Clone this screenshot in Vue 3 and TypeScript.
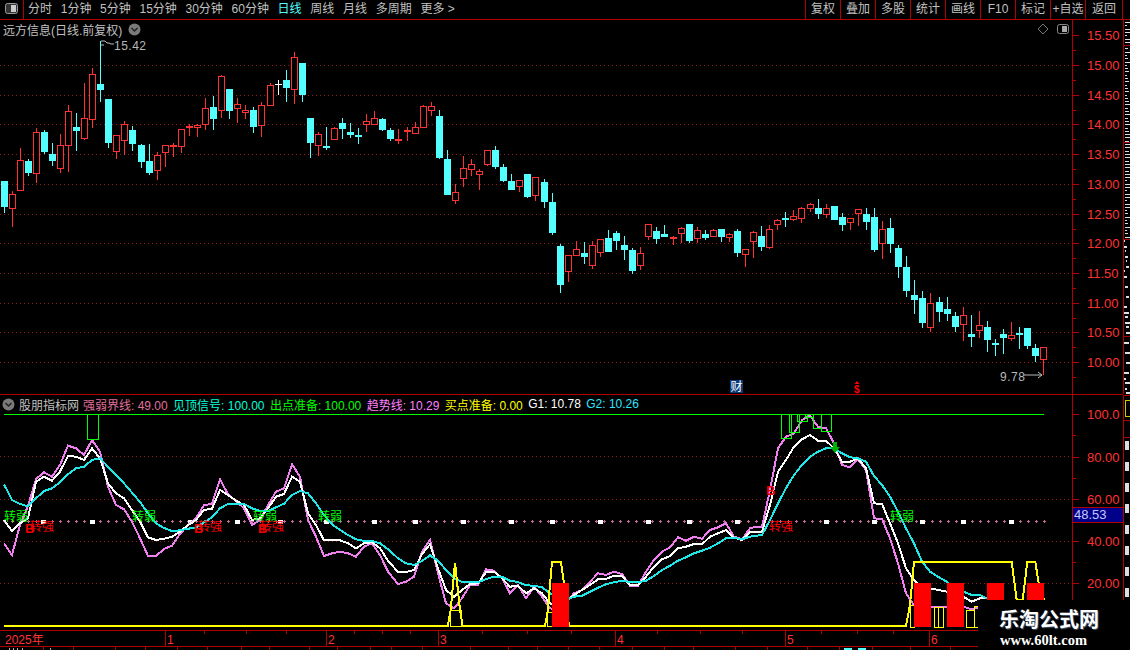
<script setup lang="ts">
type C = { x: number; red: boolean; white: boolean; bt: number; bb: number; wt: number; wb: number }
const R = 'r', B = 'c', W = 'w'
type Raw = [number, string, number, number, number, number]
const seg1: Raw[] = [
  [13,B,423,500,423,518],[37,R,463,506,453,560],[61,R,361,452,325,452],[85,B,363,398,357,408],[109,R,277,403,265,428],
  [133,B,277,335,270,342],[157,B,343,362,309,378],[181,R,316,386,282,398],[205,R,214,319,196,395],[229,B,261,273,220,332],
  [253,R,235,296,130,299],[277,R,103,241,85,265],[301,B,132,150,2,185],[325,B,177,308,177,323],[349,R,286,335,286,356],
  [373,R,253,302,244,344],[397,B,270,311,259,332],[424,B,316,365,312,383],[448,B,363,398,312,404],[472,R,346,394,337,419],
  [496,R,316,338,316,380],[520,R,316,319,310,350],[544,R,268,320,268,338],[568,R,259,265,252,287],[592,R,256,265,253,290],
  [616,R,205,256,175,269],[640,B,202,236,168,269],[664,R,109,212,105,233],[688,B,148,212,148,236],[712,R,193,208,175,248],
  [736,R,211,220,196,236],[760,B,210,260,202,278],[784,R,196,259,187,290],[811,R,136,197,130,197],[835,W,133,135,121,165],
  [859,B,121,143,90,185],[883,R,52,149,36,191],[907,B,70,164,70,185],[931,B,235,308,235,353],[955,R,283,319,277,347],
  [979,B,319,323,262,329],[1003,R,265,301,262,301],
]
const seg2: Raw[] = [
  [7,B,99,117,84,147],[31,B,126,135,99,144],[55,B,135,140,114,162],[79,R,94,104,72,126],[103,R,85,104,64,104],
  [127,B,87,120,84,122],[151,B,120,147,114,153],[175,R,147,153,117,162],[202,R,120,126,111,153],[226,R,112,131,96,131],
  [250,R,49,113,45,113],[274,R,49,62,37,78],[298,B,78,204,60,207],[322,B,207,315,180,315],[346,R,307,332,282,342],
  [370,R,235,266,198,291],[394,R,223,239,207,258],[418,R,244,254,237,300],[442,R,181,224,181,228],[466,B,180,231,168,237],
  [490,B,232,273,222,276],[514,B,273,300,252,300],[538,R,271,290,271,306],[562,B,252,321,252,324],[586,R,262,317,262,333],
  [613,B,276,336,267,354],[637,B,336,429,309,435],[661,B,468,585,462,609],[685,R,496,545,496,576],[709,R,478,497,453,497],
  [733,B,489,501,456,522],[757,R,466,527,453,537],[781,R,448,488,448,501],[805,B,444,486,420,486],[829,B,430,453,423,480],
  [853,B,465,480,438,510],[877,B,480,543,474,552],[901,R,490,527,471,540],[925,R,403,440,403,450],[949,B,423,447,411,462],
  [973,B,432,441,405,441],[1000,R,441,447,438,465],
]
const seg3: Raw[] = [
  [5,R,115,133,112,158],[28,B,102,153,102,159],[52,R,121,146,112,159],[76,B,132,144,120,150],[100,R,121,142,118,142],
  [124,B,117,141,117,156],[148,R,133,144,129,156],[172,B,123,189,117,201],[196,R,178,194,178,231],[220,R,127,157,124,204],
  [244,B,138,171,108,183],[268,R,118,173,105,177],[292,R,91,106,88,120],[316,B,85,90,66,111],[340,R,79,90,60,92],
  [364,R,55,86,52,99],[391,R,43,56,39,66],[415,B,54,72,27,87],[439,R,55,74,43,83],[463,B,48,90,48,90],
  [487,B,81,105,69,123],[511,R,85,100,85,120],[535,R,58,71,58,108],[559,B,72,95,54,120],[583,B,81,180,54,186],
  [607,R,118,161,93,207],[631,B,114,162,84,189],[655,B,174,231,165,264],[679,B,231,303,198,321],[703,B,315,330,270,372],
  [727,B,324,399,303,414],[751,R,340,413,309,426],[778,B,336,366,321,396],[802,B,357,372,321,393],[826,B,378,411,366,426],
  [850,R,376,404,351,453],[874,B,432,441,375,471],[898,R,406,423,363,444],[922,B,411,450,393,486],[946,B,459,465,447,498],
  [970,B,432,444,417,492],[994,R,436,446,396,453],[1018,B,429,435,411,477],[1042,B,414,468,414,477],[1066,B,474,498,462,516],
  [1090,R,472,509,472,555],
]
const conv = (s: Raw[], x0: number, y0: number): C[] =>
  s.map(([zx, k, bt, bb, wt, wb]) => ({
    x: Math.floor(x0 + zx / 3),
    red: k === R,
    white: k === W,
    bt: Math.round(y0 + bt / 3),
    bb: Math.round(y0 + bb / 3),
    wt: Math.round(y0 + wt / 3),
    wb: Math.round(y0 + wb / 3),
  }))
const candles: C[] = [...conv(seg1, 0, 40), ...conv(seg2, 340, 90), ...conv(seg3, 680, 190)]

const pl = (a: number[], x0: number, y0: number): string => {
  const out: string[] = []
  for (let i = 0; i < a.length; i += 2) out.push(`${(x0 + a[i] / 3).toFixed(1)},${(y0 + a[i + 1] / 3).toFixed(1)}`)
  return out.join(' ')
}
const cyan = [
  pl([12,163,36,210,60,222,84,229,108,205,132,183,156,175,180,157,204,133,228,115,252,110,276,90,300,85,324,110,348,136,372,160,396,188,420,216,444,250,468,280,492,294,516,303,540,301,564,296,588,293,612,277,636,262,660,235,684,222,708,221,732,222,756,235,780,243,804,244,828,232,852,221,876,195,900,183,924,190,948,220,972,255,996,283,1020,300,1044,315,1068,328,1092,333,1116,333], 0, 430),
  pl([0,340,24,358,54,385,78,400,102,405,126,393,150,376,174,392,198,420,222,445,246,456,270,456,294,457,318,447,342,440,366,440,390,452,414,456,438,466,462,467,486,472,510,490,534,500,558,510,582,500,606,497,630,485,654,473,678,463,702,457,726,452,750,456,774,457,798,452,822,438,846,420,870,407,894,392,918,382,942,370,966,362,990,353,1014,340,1038,325,1062,323,1086,328,1110,320], 380, 430),
  pl([36,405,60,360,84,310,108,265,132,225,156,195,180,170,204,155,228,145,252,145,276,160,300,172,324,175,348,185,372,228,396,255,420,290,444,335,468,385,492,430,516,485,540,515,564,530,590,545,615,565,640,575,665,585,690,585,710,595], 750, 400),
].join(' ')
const white = [
  pl([12,270,36,303,60,280,84,265,108,155,132,140,156,152,180,125,204,78,228,80,252,90,276,55,300,85,324,160,348,190,372,205,396,240,420,275,444,322,468,330,492,326,516,320,540,305,564,285,588,270,612,240,636,236,660,180,684,195,708,212,732,225,756,270,780,265,804,235,828,200,852,192,876,140,900,155,924,250,948,285,972,331,996,331,1020,331,1044,340,1068,355,1092,340,1116,337], 0, 430),
  pl([0,355,24,392,54,426,78,426,102,420,126,372,150,343,174,415,198,480,222,500,246,480,270,462,294,460,318,427,342,425,366,445,390,470,414,467,438,490,462,475,486,490,510,520,534,530,558,512,582,495,606,480,630,465,654,448,678,447,702,437,726,438,750,465,774,465,798,440,822,410,846,388,870,378,894,355,918,350,942,342,966,343,990,320,1014,310,1038,300,1062,323,1086,330,1110,305], 380, 430),
  pl([36,395,60,315,84,215,108,180,132,140,156,118,180,105,204,122,228,122,252,145,276,185,300,185,324,175,348,205,372,310,396,312,420,370,444,430,468,505,492,540,516,565,540,565,564,570,590,575,615,580,640,590,665,605,690,595,710,595], 750, 400),
].join(' ')
const pink = [
  pl([12,340,36,375,60,285,84,228,108,147,132,127,156,140,180,105,204,47,228,55,252,75,276,30,300,65,324,170,348,225,372,238,396,275,420,325,444,378,468,378,492,357,516,347,540,312,564,285,588,265,612,225,636,222,660,148,684,193,708,213,732,235,756,285,780,270,804,225,828,185,852,175,876,103,900,140,924,270,948,320,972,378,996,370,1020,365,1044,370,1068,380,1092,350,1116,340], 0, 430),
  pl([0,375,24,425,54,462,78,455,102,440,126,365,150,330,174,430,198,520,222,535,246,505,270,465,294,465,318,418,342,422,366,445,390,490,414,465,438,505,462,470,486,500,510,535,534,540,558,518,582,490,606,480,630,455,654,430,678,435,702,425,726,432,750,467,774,467,798,425,822,390,846,365,870,352,894,322,918,332,942,320,966,326,990,300,1014,292,1038,280,1062,320,1086,328,1110,295], 380, 430),
  pl([12,382,36,380,60,270,84,145,108,110,132,100,156,60,180,47,204,80,228,85,252,130,276,195,300,202,324,178,348,210,372,355,396,357,420,415,444,490,468,580,492,615,516,620,540,620,564,620,590,620,615,620,640,620,665,628,690,620,710,620], 750, 400),
].join(' ')
const yellow = '4,626 447.7,626 450.7,610 455,562.7 460,610 462.7,626 545,626 547.7,611 552,562 561,562 564,583 569,626 906,626 910,605 914,562 1011.7,562 1016.7,600 1022.7,600 1027.3,562 1035.3,562 1038.7,583 1044,600'
const yellowBoxes = [[450,610,11,16],[547,612,5,14],[910,605,4,22],[934,607,9,20],[966,610,8,17],[974,606,4,21]]
const greenBoxes = [[87,414,11,25],[781,414,10,24],[789,414,10,18],[797,414,10,7],[805,414,8,3],[813,414,8,14],[821,414,10,17]]
const redBars = [[552,583,17,44],[914,583,17,44],[947,583,17,44],[987,583,17,17],[1027,583,17,17]]
const weak = [4, 132, 253, 318, 890]
const strong = [30, 198, 260, 769]
const bMarks = [[25, 533], [194, 533], [258, 533], [766, 495]]

const priceGrid = [65, 95, 124, 154, 184, 214, 243, 273, 303, 332, 362]
const priceLabels = ['15.00','14.50','14.00','13.50','13.00','12.50','12.00','11.50','11.00','10.50','10.00']
const indGrid = [456, 499, 541, 583]
const indLabels = [{ y: 414, t: '100.0' }, { y: 457, t: '80.00' }, { y: 499, t: '60.00' }, { y: 541, t: '40.00' }, { y: 583, t: '20.00' }]
const plusDots: number[] = []
for (let x = 4; x <= 1044; x += 8) plusDots.push(x)
const squares = [43, 92, 190, 237, 280, 326, 374, 415, 463, 511, 552, 600, 648, 689, 737, 826, 874, 922, 963, 1011]

const priceTicks = [35, ...priceGrid]
const priceMinor = priceTicks.map((y) => y + 15)

const toolLeft = [
  { t: '分时' }, { t: '1分钟' }, { t: '5分钟' }, { t: '15分钟' }, { t: '30分钟' }, { t: '60分钟' },
  { t: '日线', on: true }, { t: '周线' }, { t: '月线' }, { t: '多周期' }, { t: '更多 >' },
]
const toolRight = ['复权', '叠加', '多股', '统计', '画线', 'F10', '标记', '+自选', '返回']
const legend = [
  { t: '强弱界线: 49.00', c: 'l-pink' }, { t: '见顶信号: 100.00', c: 'l-teal' }, { t: '出点准备: 100.00', c: 'l-green' },
  { t: '趋势线: 10.29', c: 'l-mag' }, { t: '买点准备: 0.00', c: 'l-yel' }, { t: 'G1: 10.78', c: 'l-white' }, { t: 'G2: 10.26', c: 'l-cyan' },
]
const months = [{ x: 165, t: '1' }, { x: 326, t: '2' }, { x: 438, t: '3' }, { x: 615, t: '4' }, { x: 785, t: '5' }, { x: 929, t: '6' }]
const shortTicks = [204, 246, 286, 354, 382, 410, 482, 527, 571, 657, 700, 742, 821, 857, 893]
const footTicks = [43, 73, 115, 145, 177, 207, 241, 269, 309, 337, 370, 391, 422, 470, 508, 537, 568, 599, 632, 664, 693, 735, 767, 807, 839, 872, 910, 950]

const stripDividers = [45, 142, 239, 336, 395, 420, 437]
const stripBars: number[][] = []
for (let y = 22; y < 395; y += 3.3) {
  const i = Math.round(y)
  if (stripDividers.includes(i)) continue
  const w = 2 + ((i * 7) % 5)
  if (i < 239) stripBars.push([1125, i, w, 1])
  else if (i % 2 === 0) stripBars.push([1124 + (i % 3), i, w - 1, 2])
}
for (let y = 441; y < 600; y += 21) stripBars.push([1125, y, 4, 9])
</script>

<template>
  <div class="screen">
    <header class="toolbar">
      <div class="tool-icon">
        <svg width="14" height="12" viewBox="0 0 14 12">
          <rect x="0.5" y="0.5" width="12" height="10" rx="2" fill="#333" stroke="#999" />
          <rect x="6" y="2" width="5" height="7" fill="#ccc" />
        </svg>
      </div>
      <nav class="tool-left">
        <span v-for="i in toolLeft" :key="i.t" :class="{ on: i.on }">{{ i.t }}</span>
      </nav>
      <nav class="tool-right">
        <span v-for="i in toolRight" :key="i">{{ i }}</span>
      </nav>
    </header>

    <div class="workspace">
      <div class="charts">
        <section class="panel price">
          <div class="plot">
            <div class="title-row">
              <span>远方信息(日线.前复权)</span>
              <svg class="chev" width="13" height="13" viewBox="0 0 13 13">
                <circle cx="6.5" cy="6.5" r="6" fill="#7a7a7a" />
                <path d="M3.5 5 L6.5 8 L9.5 5" fill="none" stroke="#222" stroke-width="1.5" />
              </svg>
              <span class="spacer"></span>
              <svg width="12" height="12" viewBox="0 0 12 12">
                <path d="M6 1 L11 6 L6 11 L1 6 Z" fill="none" stroke="#777" />
              </svg>
              <svg class="pane-ic" width="13" height="11" viewBox="0 0 13 11">
                <rect x="0.5" y="0.5" width="11" height="9" rx="2" fill="none" stroke="#888" />
                <rect x="5" y="2" width="5" height="6" fill="#aaa" />
              </svg>
            </div>
            <svg class="plot-svg" width="1073" height="356" viewBox="0 38 1073 356">
              <line v-for="y in priceGrid" :key="y" x1="0" x2="1072" :y1="y + 0.5" :y2="y + 0.5" class="grid-dot" />
              <g shape-rendering="crispEdges">
                <g v-for="c in candles" :key="c.x">
                  <line :x1="c.x + 0.5" :x2="c.x + 0.5" :y1="c.wt" :y2="c.wb" :stroke="c.red ? '#ff3232' : c.white ? '#ffffff' : '#54ffff'" />
                  <line v-if="c.white" :x1="c.x - 3" :x2="c.x + 4" :y1="c.bt + 0.5" :y2="c.bt + 0.5" stroke="#fff" />
                  <rect v-else-if="c.red" :x="c.x - 2.5" :y="c.bt + 0.5" width="6" :height="Math.max(c.bb - c.bt - 1, 1)" fill="#000" stroke="#ff3232" />
                  <rect v-else :x="c.x - 3" :y="c.bt" width="7" :height="Math.max(c.bb - c.bt, 1)" fill="#54ffff" />
                </g>
              </g>
              <path d="M101 41 h4 l2 2 h2 l2 1 h3 M101 45 h3" fill="none" stroke="#bbb" />
              <text x="114" y="50" class="t-grey">15.42</text>
              <text x="1000" y="381" class="t-grey">9.78</text>
              <path d="M1024 375 h18 M1038 372 l4 3 l-4 3" fill="none" stroke="#bbb" />
              <rect x="730" y="380" width="13" height="13" fill="#0a3a78" />
              <text x="730.5" y="391" class="t-cai">财</text>
              <path d="M857 381 l-2.5 3 h5 Z" fill="#f00" />
              <text x="854" y="392.5" class="t-s">$</text>
            </svg>
          </div>
          <div class="axis">
            <svg width="50" height="374" viewBox="1073 20 50 374">
              <g stroke="#b00000" shape-rendering="crispEdges">
                <line v-for="y in priceTicks" :key="y" x1="1073" x2="1079" :y1="y + 0.5" :y2="y + 0.5" />
                <line v-for="y in priceMinor" :key="'m' + y" x1="1073" x2="1076" :y1="y + 0.5" :y2="y + 0.5" />
              </g>
              <text x="1087" y="40" class="t-axis">15.50</text>
              <text v-for="(l, i) in priceLabels" :key="l" x="1087" :y="priceGrid[i] + 5" class="t-axis">{{ l }}</text>
            </svg>
          </div>
        </section>

        <section class="panel indicator">
          <div class="plot">
            <div class="legend">
              <svg width="13" height="13" viewBox="0 0 13 13">
                <circle cx="6.5" cy="6.5" r="6" fill="#7a7a7a" />
                <path d="M3.5 5 L6.5 8 L9.5 5" fill="none" stroke="#222" stroke-width="1.5" />
              </svg>
              <span class="l-name">股朋指标网</span>
              <span v-for="l in legend" :key="l.t" :class="l.c">{{ l.t }}</span>
            </div>
            <svg class="plot-svg" width="1073" height="217" viewBox="0 413 1073 217">
              <line v-for="y in indGrid" :key="y" x1="0" x2="1072" :y1="y + 0.5" :y2="y + 0.5" class="grid-dot" />
              <line x1="4" x2="1044" y1="414.5" y2="414.5" stroke="#0f0" shape-rendering="crispEdges" />
              <g shape-rendering="crispEdges">
                <path v-for="x in plusDots" :key="x" :d="`M${x - 1} 521.5 h3 M${x + 0.5} 520 v3`" stroke="#c86a96" fill="none" />
                <rect v-for="x in squares" :key="'s' + x" :x="x - 2" y="520" width="5" height="4" fill="#fff" />
              </g>
              <g fill="none" stroke-width="2" shape-rendering="crispEdges">
                <polyline :points="pink" stroke="#f080f0" />
                <polyline :points="white" stroke="#fff" />
                <polyline :points="cyan" stroke="#1fe8e8" />
                <polyline :points="yellow" stroke="#ff0" />
              </g>
              <g shape-rendering="crispEdges">
                <rect v-for="(g, i) in greenBoxes" :key="i" :x="g[0] + 0.5" :y="g[1] + 0.5" :width="g[2]" :height="g[3]" fill="none" stroke="#0f0" />
                <rect v-for="(b, i) in yellowBoxes" :key="i" :x="b[0] + 0.5" :y="b[1] + 0.5" :width="b[2]" :height="b[3]" fill="none" stroke="#ff0" />
                <line x1="938.5" x2="938.5" y1="607" y2="627" stroke="#ff0" />
                <rect v-for="(b, i) in redBars" :key="i" :x="b[0]" :y="b[1]" :width="b[2]" :height="b[3]" fill="#f00" />
              </g>
              <text v-for="x in weak" :key="x" :x="x" y="521" class="t-weak">转弱</text>
              <text v-for="x in strong" :key="x" :x="x" y="531" class="t-strong">转强</text>
              <text v-for="b in bMarks" :key="b[0]" :x="b[0]" :y="b[1]" class="t-b">B</text>
              <path d="M833 442 h4 v5 h3 l-5 6 l-5 -6 h3 Z" fill="#00b000" />
            </svg>
          </div>
          <div class="axis">
            <svg width="50" height="235" viewBox="1073 395 50 235">
              <g stroke="#b00000" shape-rendering="crispEdges">
                <line v-for="l in indLabels" :key="l.y" x1="1073" x2="1079" :y1="l.y + 0.5" :y2="l.y + 0.5" />
                <line v-for="y in [435, 478, 520, 562]" :key="y" x1="1073" x2="1076" :y1="y + 0.5" :y2="y + 0.5" />
              </g>
              <text v-for="l in indLabels" :key="l.t" x="1087" :y="l.y + 5" class="t-axis">{{ l.t }}</text>
            </svg>
            <div class="cursor-val">48.53</div>
          </div>
        </section>

        <div class="timeline">
          <svg width="1123" height="15" viewBox="0 631 1123 15">
            <text x="5" y="644" class="t-axis t-time">2025年</text>
            <g stroke="#b00000" shape-rendering="crispEdges">
              <line v-for="m in months" :key="m.x" :x1="m.x + 0.5" :x2="m.x + 0.5" y1="631" y2="646" />
              <line v-for="x in shortTicks" :key="x" :x1="x + 0.5" :x2="x + 0.5" y1="631" y2="634" />
            </g>
            <text v-for="m in months" :key="m.t" :x="m.x + 2" y="644" class="t-axis t-time">{{ m.t }}</text>
          </svg>
        </div>
        <div class="foot">
          <svg width="1123" height="3" viewBox="0 647 1123 3">
            <g stroke="#b00000" shape-rendering="crispEdges">
              <line v-for="x in footTicks" :key="x" :x1="x + 0.5" :x2="x + 0.5" y1="647" y2="650" />
            </g>
            <path d="M9 648 v2 M13 648 v2 M17 648 v2 M22 648 v2 M50 648 v2" stroke="#aaa" shape-rendering="crispEdges" />
            <path d="M844 649 h8 M858 649 h8" stroke="#54ffff" stroke-width="2" shape-rendering="crispEdges" />
          </svg>
        </div>
      </div>
      <aside class="strip">
        <svg width="7" height="630" viewBox="1123 20 7 630">
          <g shape-rendering="crispEdges">
            <line x1="1123" x2="1130" v-for="y in stripDividers" :key="y" :y1="y + 0.5" :y2="y + 0.5" stroke="#b00000" />
            <rect v-for="(b, i) in stripBars" :key="i" :x="b[0]" :y="b[1]" :width="b[2]" :height="b[3]" fill="#ddd" />
            <rect x="1125" y="400" width="5" height="16" fill="none" stroke="#cc0" />
          </g>
        </svg>
      </aside>
    </div>

    <div class="watermark">
      <div class="wm-cn">乐淘公式网</div>
      <div class="wm-en">www.60lt.com</div>
    </div>
  </div>
</template>

<style>
html, body { background: #000; }
</style>

<style scoped>
.screen {
  position: relative;
  width: 1130px;
  height: 650px;
  overflow: hidden;
  background: #000;
  display: flex;
  flex-direction: column;
  font-family: "Liberation Sans", "Noto Sans CJK SC", sans-serif;
  font-size: 12px;
  color: #c0c0c0;
}
svg { display: block; }
.toolbar {
  height: 20px;
  flex: none;
  display: flex;
  border-bottom: 1px solid #b00000;
  box-sizing: border-box;
}
.tool-icon {
  width: 24px;
  box-sizing: border-box;
  border-right: 1px solid #b00000;
  padding: 3px 0 0 5px;
}
.tool-left {
  display: flex;
  gap: 8.7px;
  padding-left: 4px;
  line-height: 19px;
}
.tool-left .on { color: #54ffff; }
.tool-right {
  margin-left: auto;
  margin-right: 7px;
  display: flex;
  line-height: 19px;
  border-right: 1px solid #b00000;
}
.tool-right span {
  width: 35px;
  box-sizing: border-box;
  text-align: center;
  border-left: 1px solid #b00000;
}
.tool-right span:last-child { width: 37px; }
.workspace {
  flex: 1;
  display: flex;
  min-height: 0;
}
.charts {
  width: 1123px;
  flex: none;
  display: flex;
  flex-direction: column;
}
.panel { display: flex; }
.price { height: 375px; border-bottom: 1px solid #b00000; box-sizing: border-box; }
.indicator { height: 235px; }
.plot { width: 1073px; flex: none; }
.axis {
  position: relative;
  flex: 1;
  border-left: 1px solid #b00000;
  margin-left: -1px;
  border-right: 1px solid #b00000;
}
.title-row {
  height: 18px;
  display: flex;
  align-items: center;
  padding: 0 3px;
  gap: 6px;
}
.title-row .spacer { flex: 1; }
.pane-ic { margin-left: 2px; }
.legend {
  height: 18px;
  display: flex;
  align-items: center;
  gap: 5.4px;
  padding-left: 2px;
  white-space: nowrap;
}
.l-name { color: #c0c0c0; margin-left: -1.4px; margin-right: -1.4px; }
.l-pink { color: #e0709c; }
.l-teal { color: #00ffd8; }
.l-green { color: #00ff00; }
.l-mag { color: #ff80ff; }
.l-yel { color: #ffff00; }
.l-white { color: #ffffff; }
.l-cyan { color: #30e4ff; }
.cursor-val {
  position: absolute;
  left: 0;
  right: 0;
  top: 112px;
  height: 16px;
  box-sizing: border-box;
  background: #00008a;
  border-top: 1px solid #b00000;
  border-bottom: 1px solid #b00000;
  color: #c8c8ff;
  font-size: 13px;
  line-height: 14px;
  padding-left: 1px;
}
.timeline {
  height: 17px;
  flex: none;
  box-sizing: border-box;
  border-top: 1px solid #b00000;
  border-bottom: 1px solid #b00000;
}
.foot { height: 3px; flex: none; }
.strip { width: 7px; flex: none; }
.grid-dot {
  stroke: #901c1c;
  stroke-width: 1;
  stroke-dasharray: 1 3;
  shape-rendering: crispEdges;
}
.t-grey { fill: #b8b8b8; font-size: 12px; letter-spacing: 0.5px; }
.t-axis { fill: #ff3232; font-size: 13px; }
.t-time { font-size: 12px; }
.t-weak { fill: #00ff00; font-size: 12px; }
.t-strong { fill: #ff0000; font-size: 12px; }
.t-b { fill: #f00000; font-size: 13px; font-weight: 700; }
.t-cai { fill: #fff; font-size: 12px; }
.t-s { fill: #f00; font-size: 10px; font-weight: 700; }
.watermark {
  position: absolute;
  right: 0;
  bottom: 0;
  width: 152px;
  height: 50px;
  background: #000;
  color: #fff;
  padding-left: 21px;
  box-sizing: border-box;
}
.wm-cn {
  font-size: 20px;
  font-weight: 700;
  line-height: 26px;
  margin-top: 7px;
  text-shadow: 1px 1px 1px #456;
}
.wm-en {
  font-family: "Liberation Serif", serif;
  font-size: 14.5px;
  font-weight: 700;
  line-height: 14px;
  padding-left: 1px;
}
</style>
